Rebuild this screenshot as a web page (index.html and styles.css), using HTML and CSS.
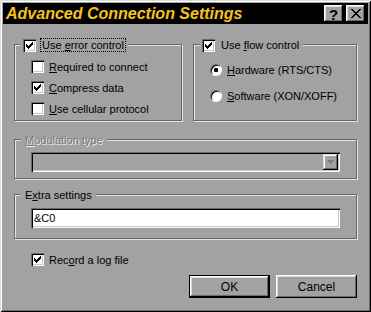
FILE: index.html
```html
<!DOCTYPE html>
<html lang="en">
<head>
    <meta charset="UTF-8">
    <title>Advanced Connection Settings</title>
    <link rel="stylesheet" href="styles.css">
</head>
<body>
    <div class="window">
        <div class="titlebar">
            <span class="title">Advanced Connection Settings</span>
            <div class="title-btns">
                <span class="tbtn help">?</span>
                <span class="tbtn">
                    <svg width="10" height="9" viewBox="0 0 10 9" shape-rendering="crispEdges"><path d="M0 0h2v1H0zM8 0h2v1H8zM1 1h2v1H1zM7 1h2v1H7zM2 2h2v1H2zM6 2h2v1H6zM3 3h4v1H3zM4 4h2v1H4zM3 5h4v1H3zM2 6h2v1H2zM6 6h2v1H6zM1 7h2v1H1zM7 7h2v1H7zM0 8h2v1H0zM8 8h2v1H8z" fill="#000"/></svg>
                </span>
            </div>
        </div>

        <div class="content">
            <div class="top-row">
                <div class="group g-error">
                    <div class="group-title">
                        <span class="check on"><svg width="7" height="7" viewBox="0 0 7 7" shape-rendering="crispEdges"><path d="M6 0h1v1H6zM5 1h2v1H5zM0 2h1v1H0zM4 2h3v1H4zM0 3h2v1H0zM3 3h3v1H3zM0 4h5v1H0zM1 5h3v1H1zM2 6h1v1H2z"/></svg></span>
                        <span class="label focus">Use <u>e</u>rror control</span>
                    </div>
                    <div class="options checks">
                        <div class="opt"><span class="check"></span><span><u>R</u>equired to connect</span></div>
                        <div class="opt"><span class="check on"><svg width="7" height="7" viewBox="0 0 7 7" shape-rendering="crispEdges"><path d="M6 0h1v1H6zM5 1h2v1H5zM0 2h1v1H0zM4 2h3v1H4zM0 3h2v1H0zM3 3h3v1H3zM0 4h5v1H0zM1 5h3v1H1zM2 6h1v1H2z"/></svg></span><span><u>C</u>ompress data</span></div>
                        <div class="opt"><span class="check"></span><span><u>U</u>se cellular protocol</span></div>
                    </div>
                </div>

                <div class="group g-flow">
                    <div class="group-title">
                        <span class="check on"><svg width="7" height="7" viewBox="0 0 7 7" shape-rendering="crispEdges"><path d="M6 0h1v1H6zM5 1h2v1H5zM0 2h1v1H0zM4 2h3v1H4zM0 3h2v1H0zM3 3h3v1H3zM0 4h5v1H0zM1 5h3v1H1zM2 6h1v1H2z"/></svg></span>
                        <span class="label">Use <u>f</u>low control</span>
                    </div>
                    <div class="options radios">
                        <div class="opt"><span class="radio on"></span><span><u>H</u>ardware (RTS/CTS)</span></div>
                        <div class="opt"><span class="radio"></span><span><u>S</u>oftware (XON/XOFF)</span></div>
                    </div>
                </div>
            </div>

            <div class="group g-modulation">
                <div class="group-title disabled"><span class="label"><u>M</u>odulation type</span></div>
                <div class="combo">
                    <span class="combo-btn"><svg width="7" height="4" viewBox="0 0 7 4" shape-rendering="crispEdges"><path d="M0 0h7v1H0zM1 1h5v1H1zM2 2h3v1H2zM3 3h1v1H3z" fill="#808080"/></svg></span>
                </div>
            </div>

            <div class="group g-extra">
                <div class="group-title"><span class="label">E<u>x</u>tra settings</span></div>
                <div class="field">&amp;C0</div>
            </div>

            <div class="opt log-row">
                <span class="check on"><svg width="7" height="7" viewBox="0 0 7 7" shape-rendering="crispEdges"><path d="M6 0h1v1H6zM5 1h2v1H5zM0 2h1v1H0zM4 2h3v1H4zM0 3h2v1H0zM3 3h3v1H3zM0 4h5v1H0zM1 5h3v1H1zM2 6h1v1H2z"/></svg></span>
                <span>Rec<u>o</u>rd a log file</span>
            </div>

            <div class="buttons">
                <button class="btn default">OK</button>
                <button class="btn">Cancel</button>
            </div>
        </div>
    </div>
</body>
</html>
```

FILE: styles.css
```css
* { box-sizing: border-box; }
body {
    margin: 0;
    font-family: 'Liberation Sans', Arial, sans-serif;
    font-size: 11px;
    color: #000;
    background: #a2a2a2;
}
.window {
    width: 371px;
    height: 312px;
    padding: 3px;
    background: #a2a2a2;
    box-shadow: inset 1px 1px #dcdcdc, inset -1px -1px #000, inset 2px 2px #fff, inset -2px -2px #6a6a6a;
    display: flex;
    flex-direction: column;
}
.titlebar {
    height: 21px;
    background: #000;
    display: flex;
    align-items: center;
    justify-content: space-between;
    padding: 0 3px;
}
.title {
    color: #f5c21b;
    font-weight: bold;
    font-style: italic;
    font-size: 16px;
}
.title-btns {
    display: flex;
    gap: 3px;
}
.tbtn {
    width: 19px;
    height: 17px;
    background: #a2a2a2;
    box-shadow: inset -1px -1px #000, inset 1px 1px #fff, inset -2px -2px #6a6a6a, inset 2px 2px #dcdcdc;
    display: flex;
    align-items: center;
    justify-content: center;
    line-height: 1;
}
.tbtn.help {
    font-weight: bold;
    font-size: 15px;
    padding-top: 1px;
}
.content {
    padding: 20px 11px 0;
}
.top-row {
    display: flex;
    gap: 11px;
}
.group {
    border: 1px solid #666;
    box-shadow: inset 1px 1px #e4e4e4, 1px 1px #e4e4e4;
    padding: 0 16px;
    display: flex;
    flex-direction: column;
}
.g-error { width: 168px; }
.g-flow { flex: 1; }
.group-title {
    display: flex;
    align-items: center;
    gap: 4px;
    height: 16px;
    width: fit-content;
    margin: -8px 0 0 -10px;
    padding: 0 2px;
    background: #a2a2a2;
}
.label {
    border: 1px solid transparent;
    padding: 0 1px;
    line-height: 12px;
}
.label.focus {
    border: 1px dotted #000;
}
.disabled .label {
    color: #7a7a7a;
    text-shadow: 1px 1px #f0f0f0;
}
.options.checks { padding: 3px 0 1px; }
.options.radios { padding-top: 4px; }
.opt {
    display: flex;
    align-items: center;
    gap: 5px;
}
.checks .opt, .log-row { height: 21px; }
.radios .opt { height: 26px; gap: 5px; }
.check {
    width: 13px;
    height: 13px;
    flex: none;
    background: #fff;
    box-shadow: inset 1px 1px #6a6a6a, inset 2px 2px #000, inset -1px -1px #fff, inset -2px -2px #c8c8c8;
    display: flex;
    align-items: center;
    justify-content: center;
}
.radio {
    width: 12px;
    height: 12px;
    flex: none;
    border-radius: 50%;
    background: #fff;
    border: 1px solid;
    border-color: #6a6a6a #fff #fff #6a6a6a;
    box-shadow: inset 1px 1px #000;
    display: flex;
    align-items: center;
    justify-content: center;
}
.radio.on::after {
    content: "";
    width: 4px;
    height: 4px;
    border-radius: 1px;
    background: #000;
}
.g-modulation {
    margin-top: 18px;
    padding-bottom: 6px;
}
.combo {
    margin-top: 4px;
    height: 20px;
    padding: 2px;
    box-shadow: inset 1px 1px #6a6a6a, inset 2px 2px #000, inset -1px -1px #fff, inset -2px -2px #c8c8c8;
    display: flex;
    justify-content: flex-end;
}
.combo-btn {
    width: 15px;
    height: 16px;
    background: #a2a2a2;
    box-shadow: inset -1px -1px #000, inset 1px 1px #dcdcdc, inset -2px -2px #6a6a6a, inset 2px 2px #fff;
    display: flex;
    align-items: center;
    justify-content: center;
}
.g-extra {
    margin-top: 15px;
    padding-bottom: 10px;
}
.field {
    margin-top: 5px;
    height: 20px;
    padding: 0 3px;
    background: #fff;
    box-shadow: inset 1px 1px #6a6a6a, inset 2px 2px #000, inset -1px -1px #fff, inset -2px -2px #c8c8c8;
    display: flex;
    align-items: center;
}
.log-row {
    margin-top: 10px;
    padding-left: 17px;
}
.buttons {
    margin-top: 5px;
    display: flex;
    justify-content: flex-end;
    gap: 6px;
}
.btn {
    width: 81px;
    height: 23px;
    font: inherit;
    font-size: 12px;
    color: #000;
    background: #a2a2a2;
    border: none;
    box-shadow: inset -1px -1px #000, inset 1px 1px #fff, inset -2px -2px #6a6a6a, inset 2px 2px #dcdcdc;
}
.btn.default {
    border: 1px solid #000;
}
```
